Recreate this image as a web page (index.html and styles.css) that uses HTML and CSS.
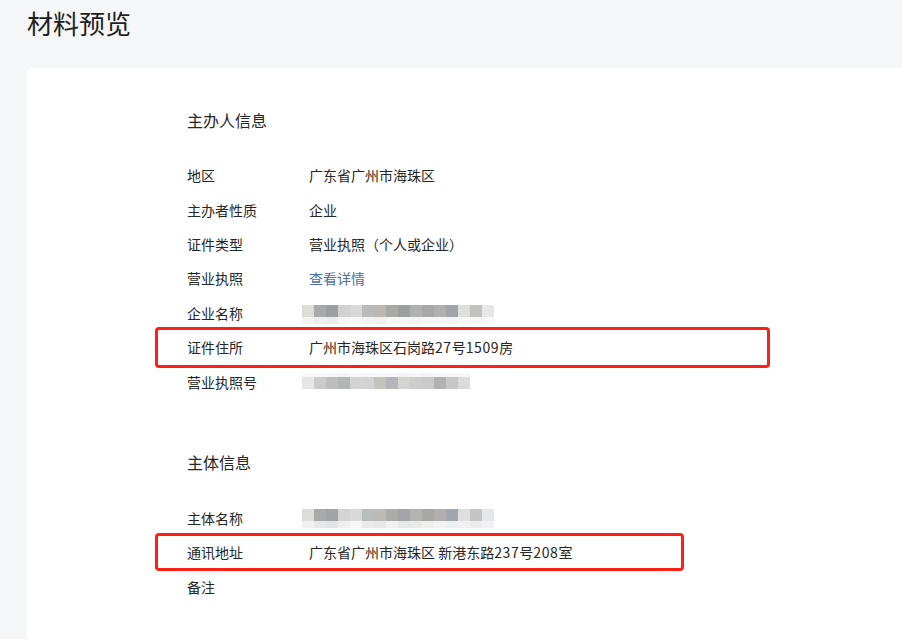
FILE: index.html
```html
<!DOCTYPE html>
<html lang="zh-CN">
<head>
<meta charset="utf-8">
<title>材料预览</title>
<link rel="stylesheet" href="styles.css">
</head>
<body>
<div class="page">
  <h1 class="page-title">材料预览</h1>
  <div class="card">
    <section class="section">
      <h2 class="section-title">主办人信息</h2>
      <div class="rows">
        <div class="row"><span class="label">地区</span><span class="value">广东省广州市海珠区</span></div>
        <div class="row"><span class="label">主办者性质</span><span class="value">企业</span></div>
        <div class="row"><span class="label">证件类型</span><span class="value">营业执照（个人或企业）</span></div>
        <div class="row"><span class="label">营业执照</span><a class="value link" href="#">查看详情</a></div>
        <div class="row"><span class="label">企业名称</span><span class="mosaic mosaic-a"></span></div>
        <div class="row hl hl-wide"><span class="label">证件住所</span><span class="value">广州市海珠区石岗路<span class="num">27</span>号<span class="num">1509</span>房</span></div>
        <div class="row"><span class="label">营业执照号</span><span class="mosaic mosaic-b"></span></div>
      </div>
    </section>
    <section class="section second">
      <h2 class="section-title">主体信息</h2>
      <div class="rows">
        <div class="row"><span class="label">主体名称</span><span class="mosaic mosaic-c"></span></div>
        <div class="row hl hl-narrow"><span class="label">通讯地址</span><span class="value">广东省广州市海珠区 新港东路<span class="num">237</span>号<span class="num">208</span>室</span></div>
        <div class="row"><span class="label">备注</span><span class="value"></span></div>
      </div>
    </section>
  </div>
</div>
</body>
</html>
```

FILE: styles.css
```css
* { box-sizing: border-box; }
html, body {
  margin: 0;
  padding: 0;
  background: #f5f6f8;
  overflow: hidden;
}
body {
  font-family: "Noto Sans CJK SC", "Noto Sans", sans-serif;
  color: #262626;
  width: 902px;
  height: 639px;
}
.page {
  padding-left: 27px;
}
.page-title {
  margin: 0;
  padding-top: 5px;
  font-size: 26px;
  line-height: 36px;
  font-weight: 400;
  color: #1f1f1f;
}
.card {
  margin-top: 27px;
  margin-right: -20px;
  background: #ffffff;
  border-radius: 4px;
  height: 571px;
  padding: 40px 0 0 160px;
}
.section-title {
  margin: 0 0 26px;
  font-size: 16px;
  line-height: 24px;
  font-weight: 400;
  color: #262626;
}
.second {
  margin-top: 51px;
}
.second .section-title {
  margin-bottom: 27px;
}
.rows {
  display: flex;
  flex-direction: column;
}
.row {
  display: flex;
  align-items: center;
  height: 34.4px;
  font-size: 14px;
}
.label {
  width: 122px;
  flex: none;
  line-height: 20px;
}
.value {
  line-height: 20px;
  color: #262626;
}
.num {
  letter-spacing: 0.6px;
}
.link {
  color: #4f6f9f;
  text-decoration: none;
}
.hl {
  border: 3px solid #fa2118;
  border-radius: 4px;
  margin-left: -32px;
  padding-left: 29px;
}
.hl-wide {
  width: 615px;
  height: 41px;
  margin-top: -3.3px;
  margin-bottom: -3.3px;
}
.hl-narrow {
  width: 529px;
  height: 38px;
  margin-top: -1.8px;
  margin-bottom: -1.8px;
}
.mosaic {
  display: block;
  margin-left: -7px;
  background-repeat: no-repeat;
}
.mosaic-a,
.mosaic-c {
  width: 192px;
  height: 19px;
  margin-top: 3px;
  border-radius: 0 2px 2px 0;
  background-position: 0 0, 0 12px;
  background-size: 192px 12px, 192px 7px;
}
.mosaic-a {
  background-image:
    linear-gradient(to right,
      #dcdcd8 0 12px, #a9a8aa 12px 24px, #9b9fa2 24px 36px, #d3d2d3 36px 48px,
      #d9d9d9 48px 60px, #b7b9bb 60px 72px, #bbb7b5 72px 84px, #a8aaa6 84px 96px,
      #9c9f9f 96px 108px, #afb2b0 108px 120px, #a8a7a5 120px 132px, #b1b0ad 132px 144px,
      #9fa5ab 144px 156px, #dfdfde 156px 168px, #c1c1bf 168px 180px, #e7e7e7 180px 192px),
    linear-gradient(to right,
      #f3f3f3 0 12px, #eeeeee 12px 24px, #ebebeb 24px 36px, #f4f4f4 36px 48px,
      #f7f7f7 48px 60px, #f2f2f2 60px 72px, #f0f0f0 72px 84px, #f6f6f6 84px 96px,
      #f5f5f5 96px 108px, #f3f3f3 108px 120px, #f6f6f6 120px 132px, #f6f6f6 132px 144px,
      #f4f4f4 144px 156px, #f8f8f8 156px 168px, #f6f6f6 168px 180px, #f8f8f8 180px 192px);
}
.mosaic-c {
  margin-top: 2px;
  background-image:
    linear-gradient(to right,
      #dcdcd8 0 12px, #aaa9aa 12px 24px, #a0a4a7 24px 36px, #d4d2d3 36px 48px,
      #d9d9d9 48px 60px, #b9bcbc 60px 72px, #bdb9b7 72px 84px, #aaaca8 84px 96px,
      #a2a4a8 96px 108px, #b3b4b2 108px 120px, #a8a7a6 120px 132px, #b1aeab 132px 144px,
      #a0a6ad 144px 156px, #dededd 156px 168px, #c5c5c3 168px 180px, #e6e7e9 180px 192px),
    linear-gradient(to right,
      #efefef 0 12px, #e6e8e8 12px 24px, #e1e3e5 24px 36px, #f0f0f0 36px 48px,
      #f6f6f6 48px 60px, #ebebeb 60px 72px, #e7e9e7 72px 84px, #f1f1f1 84px 96px,
      #e7e9e9 96px 108px, #e9ebea 108px 120px, #eeeeec 120px 132px, #f2f2f2 132px 144px,
      #eceef0 144px 156px, #f0f0f0 156px 168px, #ececec 168px 180px, #f2f2f4 180px 192px);
}
.mosaic-b {
  width: 168px;
  height: 16px;
  margin-top: -2px;
  background-position: 0 0, 0 4px;
  background-size: 168px 4px, 168px 12px;
  background-image:
    linear-gradient(to right,
      #f8f8f8 0 12px, #f8f8f8 12px 24px, #f7f7f7 24px 36px, #f4f4f4 36px 48px,
      #f8f8f8 48px 60px, #f6f6f6 60px 72px, #f8f8f8 72px 84px, #f7f7f7 84px 96px,
      #f3f3f3 96px 108px, #f6f6f6 108px 120px, #f3f3f3 120px 132px, #f7f7f7 132px 144px,
      #f5f5f5 144px 156px, #f8f8f8 156px 168px),
    linear-gradient(to right,
      #e6e6e4 0 12px, #cbcbcb 12px 24px, #bebebe 24px 36px, #b4b5b7 36px 48px,
      #d3d3d1 48px 60px, #d0d3d3 60px 72px, #c2c3bb 72px 84px, #b5b5bb 84px 96px,
      #d3d3d1 96px 108px, #cecccb 108px 120px, #c8cacc 120px 132px, #b3b1af 132px 144px,
      #c5c7c9 144px 156px, #dbdbdb 156px 168px);
}
```
